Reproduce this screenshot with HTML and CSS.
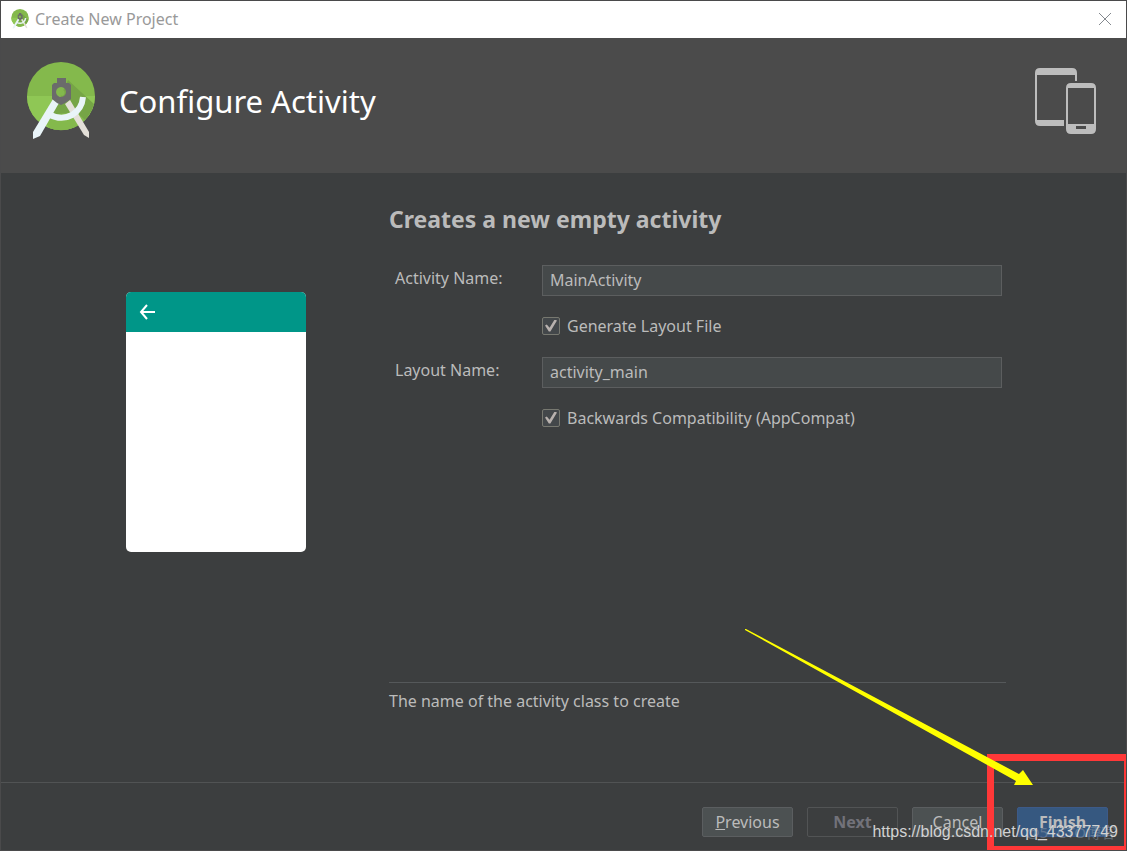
FILE: index.html
```html
<!DOCTYPE html>
<html lang="en">
<head>
<meta charset="utf-8">
<title>Create New Project</title>
<link rel="stylesheet" href="styles.css">
</head>
<body>
<svg class="defs" aria-hidden="true">
  <symbol id="studio" viewBox="0 0 70 78">
    <circle cx="35" cy="34" r="34" fill="#84b94c"/>
    <path d="M1 34h68a34 34 0 0 1-68 0z" fill="#8fc755"/>
    <path d="M42 18l26 24a34 34 0 0 1-44 24l-6-8 14-18z" fill="#76a546"/>
    <path d="M50 50l9 8a34 34 0 0 1-36 8l-3-6 12-8z" fill="#84b94c"/>
    <path d="M39 42l5-4 19 32v6l-5-3z" fill="#e4e0d8"/>
    <path d="M27 37l6 4-19 33-7 3v-7z" fill="#e9f4f8"/>
    <path d="M22 52q13 7 24 1 10-6 11-18" fill="none" stroke="#e9f4f8" stroke-width="6"/>
    <path fill-rule="evenodd" d="M31 16h9v5h3l2 2v14l-6 4-4 2-4-2-5-4V23l2-2h3zM35 25a5 5 0 1 0 .1 0z" fill="#6b6b6b"/>
    <path d="M33 32l5-4q2 5-2 6z" fill="#83b94d"/>
  </symbol>
</svg>
<div class="window">
  <header class="titlebar">
    <svg class="titlebar-icon" aria-hidden="true"><use href="#studio"/></svg>
    <span class="titlebar-text">Create New Project</span>
    <button class="close" aria-label="Close"><svg viewBox="0 0 14 14" width="14" height="14"><path d="M1 1l12 12M13 1L1 13" stroke="#84898f" fill="none"/></svg></button>
  </header>
  <div class="banner">
    <svg class="banner-logo" aria-hidden="true"><use href="#studio"/></svg>
    <h1 class="banner-title">Configure Activity</h1>
    <svg class="banner-devices" viewBox="0 0 62 66" aria-hidden="true">
      <path fill="#bdbdbd" fill-rule="evenodd" d="M5 0h32q5 0 5 5v8h-2V7H2v45h27v6H5q-5 0-5-5V5q0-5 5-5z"/>
      <path fill="#bdbdbd" fill-rule="evenodd" d="M36 15h20q5 0 5 5v41q0 5-5 5H36q-5 0-5-5V20q0-5 5-5zM33 20v36h26V20zM41 58v3h10v-3z"/>
    </svg>
  </div>
  <main class="content">
    <div class="preview">
      <div class="phone">
        <div class="phone-bar"><svg width="16" height="16" viewBox="0 0 16 16" aria-hidden="true"><path d="M8 1L2 8l6 7M2 8h14" fill="none" stroke="#fff" stroke-width="2"/></svg></div>
      </div>
    </div>
    <section class="settings">
      <h2 class="heading">Creates a new empty activity</h2>
      <form class="form">
        <label class="label" for="activity">Activity Name:</label>
        <input class="field" id="activity" type="text" value="MainActivity">
        <label class="check"><input class="box" type="checkbox" checked>Generate Layout File</label>
        <label class="label" for="layout">Layout Name:</label>
        <input class="field" id="layout" type="text" value="activity_main">
        <label class="check"><input class="box" type="checkbox" checked>Backwards Compatibility (AppCompat)</label>
      </form>
      <p class="hint">The name of the activity class to create</p>
    </section>
  </main>
  <footer class="actions">
    <button class="btn"><u>P</u>revious</button>
    <button class="btn btn-disabled" disabled>Next</button>
    <button class="btn">Cancel</button>
    <button class="btn btn-primary">Finish</button>
  </footer>
  <div class="marker"></div>
  <svg class="arrow" viewBox="0 0 288 157" aria-hidden="true"><path d="M0 0L1 0 274 145l4-4 10 15h-19l2-4L0 1z" fill="#ff0"/></svg>
  <span class="stamp">@51CTO博客</span>
  <span class="watermark">https://blog.csdn.net/qq_43377749</span>
</div>
</body>
</html>
```
FILE: styles.css
```css
* { box-sizing: border-box; }
body {
  margin: 0;
  background: #3c3e3f;
  color: #bbb;
  font: 16px/22px "Noto Sans", "Noto Sans CJK SC", sans-serif;
}
h1, h2, p { margin: 0; }
button, input { font: inherit; color: inherit; }
.defs { position: absolute; width: 0; height: 0; }
.window {
  position: relative;
  display: flex;
  flex-direction: column;
  min-height: 100vh;
  border: 1px solid #4a4a4b;
  overflow: hidden;
}
.titlebar {
  display: flex;
  align-items: center;
  height: 37px;
  padding: 0 14px 2px 10px;
  background: #fff;
  color: #999;
}
.titlebar-icon { width: 18px; height: 20px; margin-right: 6px; }
.titlebar-text { flex: 1; }
.close { display: flex; padding: 0; border: 0; background: none; }
.banner {
  display: flex;
  align-items: center;
  height: 135px;
  padding: 0 29px 10px 25px;
  background: #4b4b4b;
}
.banner-logo { width: 70px; height: 78px; }
.banner-title {
  flex: 1;
  margin-left: 23px;
  color: #fff;
  font-size: 31px;
  font-weight: 400;
  line-height: 44px;
}
.banner-devices { width: 62px; height: 66px; }
.content {
  flex: 1;
  display: grid;
  grid-template-columns: 388px 1fr;
  padding-right: 120px;
}
.preview {
  display: flex;
  justify-content: center;
  align-items: center;
  padding: 0 0 112px 42px;
}
.phone {
  width: 180px;
  height: 260px;
  border-radius: 5px;
  background: #fff;
  overflow: hidden;
}
.phone-bar {
  display: flex;
  align-items: center;
  height: 40px;
  padding-left: 13px;
  background: #009688;
}
.settings { display: flex; flex-direction: column; padding-top: 30px; }
.heading { font-size: 23px; line-height: 32px; }
.form {
  display: grid;
  grid-template-columns: 147px 1fr;
  grid-auto-rows: 31px;
  row-gap: 15px;
  align-items: center;
  padding: 30px 4px 0 6px;
}
.label { padding-bottom: 6px; }
.field {
  width: 100%;
  height: 31px;
  padding: 0 7px 2px;
  border: 1px solid #5c5e5f;
  background: #45494a;
}
.check { grid-column: 2; display: flex; align-items: center; gap: 7px; padding-bottom: 2px; }
.box {
  appearance: none;
  position: relative;
  width: 18px;
  height: 18px;
  margin: 0;
  border: 1px solid #777870;
  border-radius: 2px;
  background: #43474a;
}
.box:checked::after {
  content: "";
  position: absolute;
  inset: 2px;
  background: #b8b1ae;
  clip-path: polygon(0 50%, 15% 42%, 38% 68%, 80% 0, 100% 8%, 45% 100%, 32% 100%);
}
.hint {
  margin-top: auto;
  height: 100px;
  padding-top: 7px;
  border-top: 1px solid #55585a;
}
.actions {
  display: flex;
  justify-content: flex-end;
  gap: 14px;
  height: 68px;
  padding: 24px 18px 0;
  border-top: 1px solid #515354;
}
.btn {
  width: 91px;
  height: 30px;
  padding: 0;
  border: 1px solid #5b5e60;
  border-radius: 2px;
  background: #4c5152;
}
.btn-disabled { background: none; border-color: #525455; color: #72727a; font-weight: 700; }
.btn-primary { background: #365880; border-color: #3d5a88; font-weight: 700; }
.marker {
  position: absolute;
  right: -1px;
  bottom: -1px;
  width: 140px;
  height: 97px;
  border: solid #ff3838;
  border-width: 7px 3px 5px 7px;
}
.arrow { position: absolute; right: 93px; bottom: 64px; width: 288px; height: 157px; }
.stamp { position: absolute; right: 10px; bottom: 7px; color: #8a98a8; font-size: 15px; opacity: .5; }
.watermark {
  position: absolute;
  right: 8px;
  bottom: 7px;
  color: #d2d2d2;
  font-family: "Liberation Sans", sans-serif;
}
```
